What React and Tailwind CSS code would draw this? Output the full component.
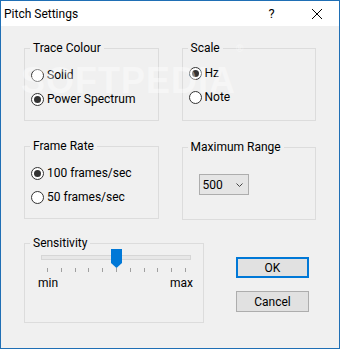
import { useState } from 'react';

function Radio({ checked, label, onClick }) {
  return (
    <button onClick={onClick} className="h-[24px] flex items-center gap-[3px] text-left">
      <span className="w-[13px] h-[13px] rounded-full border border-[#333] bg-white flex items-center justify-center">
        {checked && <span className="w-[7px] h-[7px] rounded-full bg-[#333]" />}
      </span>
      <span>{label}</span>
    </button>
  );
}

function Group({ title, className, children }) {
  return (
    <fieldset className={`border border-[#dcdcdc] ${className}`}>
      <legend className="ml-[5px] px-[3px] leading-[16px]">{title}</legend>
      {children}
    </fieldset>
  );
}

export default function App() {
  const [trace, setTrace] = useState('power');
  const [scale, setScale] = useState('hz');
  const [rate, setRate] = useState(100);
  const ticks = Array.from({ length: 11 });

  return (
    <div className="w-[340px] h-[349px] border border-[#1f6fb5] bg-[#f0f0f0] flex flex-col font-['Roboto',sans-serif] text-[12px] text-black relative overflow-hidden">
      {/* Title bar */}
      <div className="h-[25px] bg-white flex items-center shrink-0">
        <div className="flex-1 pl-[3px]">Pitch Settings</div>
        <div className="w-[45px] h-full flex items-center justify-center text-[13px]">?</div>
        <div className="w-[45px] h-full flex items-center justify-center">
          <svg width="10" height="10" viewBox="0 0 10 10">
            <path d="M0 0 L10 10 M10 0 L0 10" stroke="#000" strokeWidth="1" />
          </svg>
        </div>
      </div>

      {/* Body */}
      <div className="px-[23px] pt-[14px]">
        <div className="flex gap-[23px]">
          <Group title="Trace Colour" className="w-[135px] h-[81px]">
            <div className="pt-[7px] pl-[6px] flex flex-col">
              <Radio checked={trace === 'solid'} label="Solid" onClick={() => setTrace('solid')} />
              <Radio checked={trace === 'power'} label="Power Spectrum" onClick={() => setTrace('power')} />
            </div>
          </Group>
          <Group title="Scale" className="w-[135px] h-[81px]">
            <div className="pt-[5px] pl-[6px] flex flex-col">
              <Radio checked={scale === 'hz'} label="Hz" onClick={() => setScale('hz')} />
              <Radio checked={scale === 'note'} label="Note" onClick={() => setScale('note')} />
            </div>
          </Group>
        </div>

        <div className="flex gap-[23px] mt-[17px] items-start">
          <Group title="Frame Rate" className="w-[135px] h-[81px]">
            <div className="pt-[7px] pl-[6px] flex flex-col">
              <Radio checked={rate === 100} label="100 frames/sec" onClick={() => setRate(100)} />
              <Radio checked={rate === 50} label="50 frames/sec" onClick={() => setRate(50)} />
            </div>
          </Group>
          <Group title="Maximum Range" className="w-[135px] h-[81px] mt-[1px]">
            <div className="pt-[19px] pl-[16px]">
              <div className="w-[50px] h-[21px] border border-[#adadad] bg-[#e5e5e5] flex items-center justify-between pl-[3px] pr-[5px]">
                <span>500</span>
                <svg width="7" height="4" viewBox="0 0 7 4">
                  <path d="M0.5 0.5 L3.5 3.5 L6.5 0.5" stroke="#444" strokeWidth="1" fill="none" />
                </svg>
              </div>
            </div>
          </Group>
        </div>

        <div className="flex mt-[15px] items-start">
          <Group title="Sensitivity" className="w-[180px] h-[88px]">
            <div className="relative ml-[16px] w-[150px] pt-[4px]">
              <div className="h-[5px] border border-[#d6d6d6] bg-[#e7e7e7]" />
              <div className="flex justify-between pl-[6px] pr-[5px] mt-[8px]">
                {ticks.map((_, i) => (
                  <span key={i} className="w-px h-[4px] bg-[#a0a0a0]" />
                ))}
              </div>
              <svg className="absolute left-[70px] top-[-2px]" width="11" height="19" viewBox="0 0 11 19">
                <path d="M0 0 H11 V14 L5.5 19 L0 14 Z" fill="#0078d7" />
              </svg>
            </div>
            <div className="ml-[13px] w-[155px] mt-[3px] flex justify-between leading-[16px]">
              <span>min</span>
              <span>max</span>
            </div>
          </Group>
          <div className="ml-[32px] pt-[22px] flex flex-col">
            <button className="w-[73px] h-[21px] border-2 border-[#0078d7] bg-[#e1e1e1]">OK</button>
            <button className="w-[73px] h-[21px] mt-[13px] border border-[#adadad] bg-[#e1e1e1]">Cancel</button>
          </div>
        </div>
      </div>

      {/* Watermark */}
      <div className="absolute left-[20px] top-[53px] text-[36px] font-bold font-['Liberation_Sans',sans-serif] text-white opacity-40 tracking-[1px] pointer-events-none">
        SOFTPEDIA<sup className="text-[10px] align-top">®</sup>
      </div>
    </div>
  );
}
